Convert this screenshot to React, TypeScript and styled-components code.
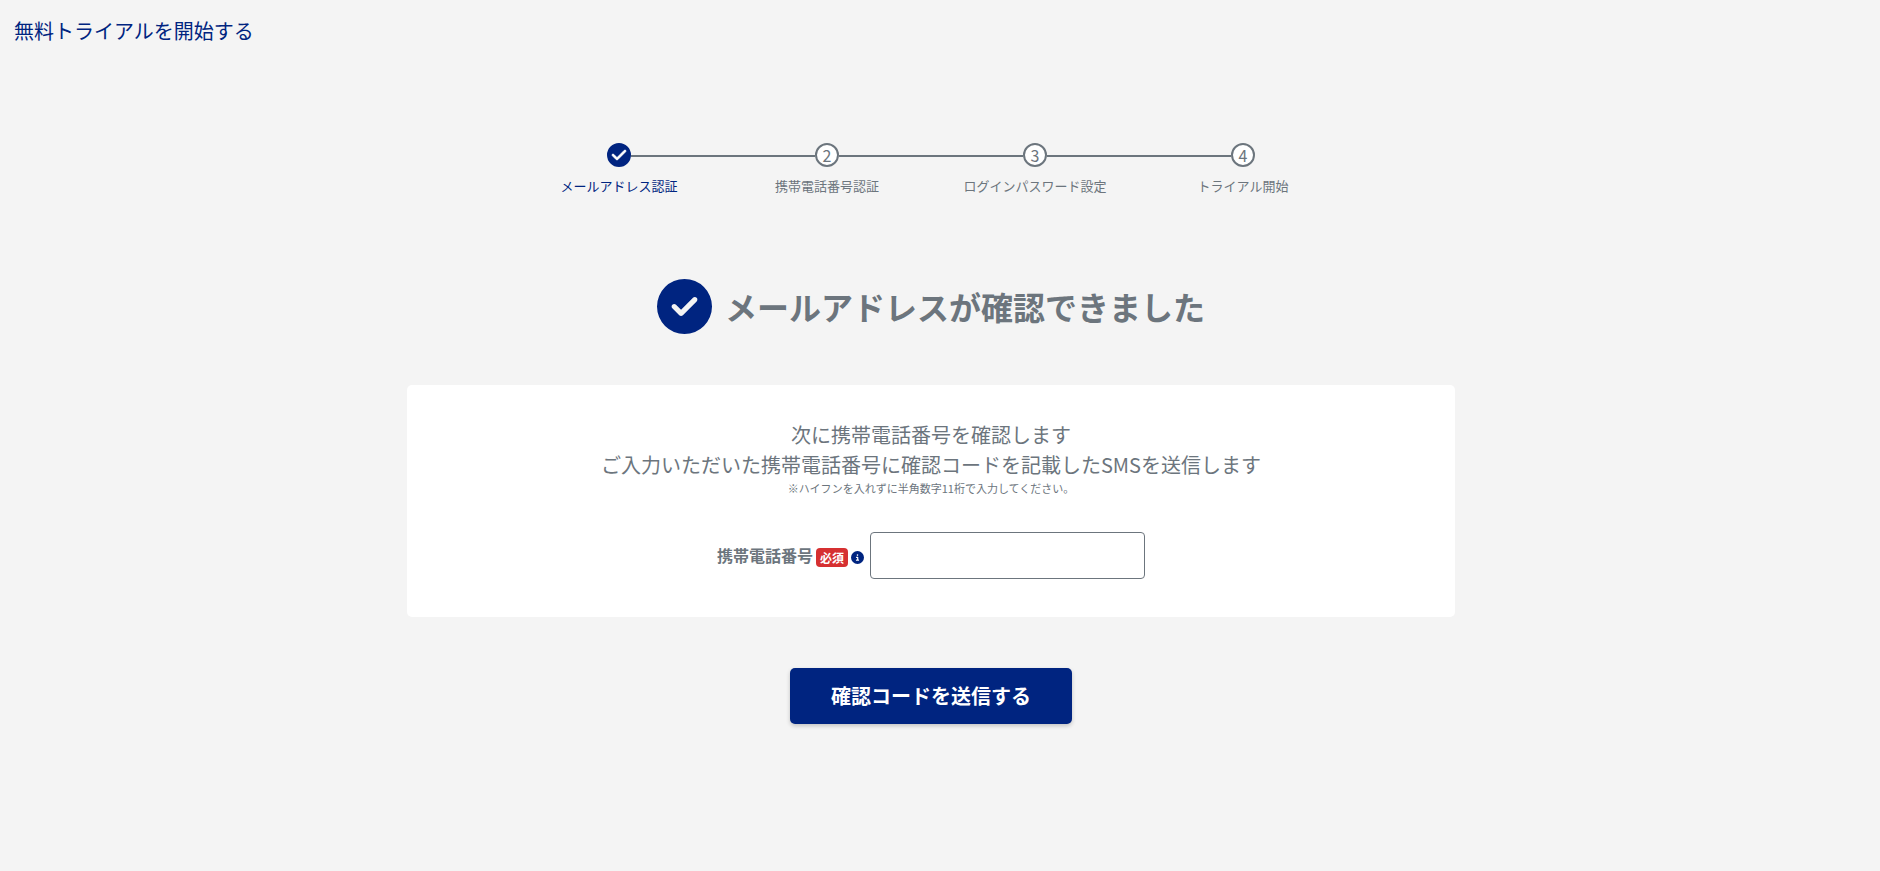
import React from "react";
import styled, { createGlobalStyle } from "styled-components";
import { FaCheck, FaCircleCheck, FaCircleInfo } from "react-icons/fa6";

const navy = "#002480";
const gray = "#6c757d";

const GlobalStyle = createGlobalStyle`
  *, *::before, *::after { box-sizing: border-box; }
  body {
    margin: 0;
    background: #f4f4f4;
    color: ${gray};
    font-family: "Noto Sans CJK JP", sans-serif;
    font-size: 16px;
    line-height: 24px;
  }
`;

const Page = styled.div`
  padding-right: 18px;
`;

const Header = styled.header`
  padding: 16px 14px;
  color: ${navy};
  font-size: 20px;
  line-height: 30px;
`;

const Main = styled.main`
  display: flex;
  flex-direction: column;
  align-items: center;
  padding: 81px 16px 48px;
`;

const Steps = styled.ol`
  display: grid;
  grid-template-columns: repeat(4, 1fr);
  width: 100%;
  max-width: 832px;
  margin: 0;
  padding: 0;
  list-style: none;
`;

const Step = styled.li<{ $done?: boolean }>`
  display: flex;
  flex-direction: column;
  gap: 7px;
  color: ${(p) => (p.$done ? navy : gray)};
  font-size: 13px;
  text-align: center;
`;

const Track = styled.div`
  display: flex;
  align-items: center;
`;

const Line = styled.span<{ $hidden: boolean }>`
  flex: 1;
  height: 2px;
  margin-top: 2px;
  background: ${(p) => (p.$hidden ? "transparent" : gray)};
`;

const Marker = styled.span<{ $done?: boolean }>`
  display: flex;
  align-items: center;
  justify-content: center;
  width: 24px;
  height: 24px;
  border: 2px solid ${(p) => (p.$done ? navy : gray)};
  border-radius: 50%;
  background: ${(p) => (p.$done ? navy : "#fff")};
  color: ${(p) => (p.$done ? "#fff" : gray)};
  font-size: 16px;
  line-height: 20px;

  svg {
    flex: none;
    overflow: visible;
    stroke-width: 24;
  }
`;

const Title = styled.h1`
  display: flex;
  align-items: center;
  gap: 13px;
  margin: 81px 0 51px;
  font-size: 32px;
  line-height: 46px;
  font-weight: 700;

  svg { color: ${navy}; }
`;

const TitleText = styled.span`
  padding-bottom: 2px;
`;

const Form = styled.form`
  display: flex;
  flex-direction: column;
  align-items: center;
  gap: 51px;
  width: 100%;
`;

const Card = styled.section`
  width: 100%;
  max-width: 1048px;
  padding: 35px 16px 38px;
  border-radius: 5px;
  background: #fff;
  text-align: center;
`;

const Lead = styled.p`
  margin: 0;
  font-size: 20px;
  line-height: 30px;
`;

const Note = styled.p`
  margin: 0;
  font-size: 11px;
  line-height: 17px;
`;

const Field = styled.div`
  display: flex;
  align-items: center;
  justify-content: center;
  gap: 6px;
  margin-top: 35px;
`;

const Label = styled.label`
  display: flex;
  align-items: center;
  gap: 3px;
  font-weight: 700;
`;

const LabelText = styled.span`
  padding-bottom: 2px;
`;

const Marks = styled.span`
  display: flex;
  align-items: center;
  gap: 3px;
  padding-top: 3px;
  color: ${navy};
`;

const Required = styled.span`
  padding: 0 4px;
  border-radius: 4px;
  background: #d63031;
  color: #fff;
  font-size: 12px;
  line-height: 19px;
`;

const PhoneInput = styled.input`
  width: 275px;
  height: 47px;
  padding: 8px 12px;
  border: 1px solid ${gray};
  border-radius: 4px;
  background: #fff;
  color: ${gray};
  font: inherit;
`;

const Submit = styled.button`
  padding: 13px 41px;
  border: 0;
  border-radius: 5px;
  background: ${navy};
  box-shadow: 0 2px 4px rgba(0, 0, 0, 0.2);
  color: #fff;
  font-family: inherit;
  font-size: 20px;
  line-height: 30px;
  font-weight: 700;
  cursor: pointer;
`;

const steps = [
  { label: "メールアドレス認証", done: true },
  { label: "携帯電話番号認証" },
  { label: "ログインパスワード設定" },
  { label: "トライアル開始" },
];

export default function App() {
  return (
    <Page>
      <GlobalStyle />
      <Header>無料トライアルを開始する</Header>
      <Main>
        <Steps>
          {steps.map((step, i) => (
            <Step key={step.label} $done={step.done}>
              <Track>
                <Line $hidden={i === 0} />
                <Marker $done={step.done}>
                  {step.done ? <FaCheck size={16} /> : i + 1}
                </Marker>
                <Line $hidden={i === steps.length - 1} />
              </Track>
              {step.label}
            </Step>
          ))}
        </Steps>
        <Title>
          <FaCircleCheck size={55} />
          <TitleText>メールアドレスが確認できました</TitleText>
        </Title>
        <Form onSubmit={(e) => e.preventDefault()}>
          <Card>
            <Lead>
              次に携帯電話番号を確認します
              <br />
              ご入力いただいた携帯電話番号に確認コードを記載したSMSを送信します
            </Lead>
            <Note>※ハイフンを入れずに半角数字11桁で入力してください。</Note>
            <Field>
              <Label htmlFor="phone">
                <LabelText>携帯電話番号</LabelText>
                <Marks>
                  <Required>必須</Required>
                  <FaCircleInfo size={13} />
                </Marks>
              </Label>
              <PhoneInput id="phone" type="tel" />
            </Field>
          </Card>
          <Submit type="submit">確認コードを送信する</Submit>
        </Form>
      </Main>
    </Page>
  );
}
